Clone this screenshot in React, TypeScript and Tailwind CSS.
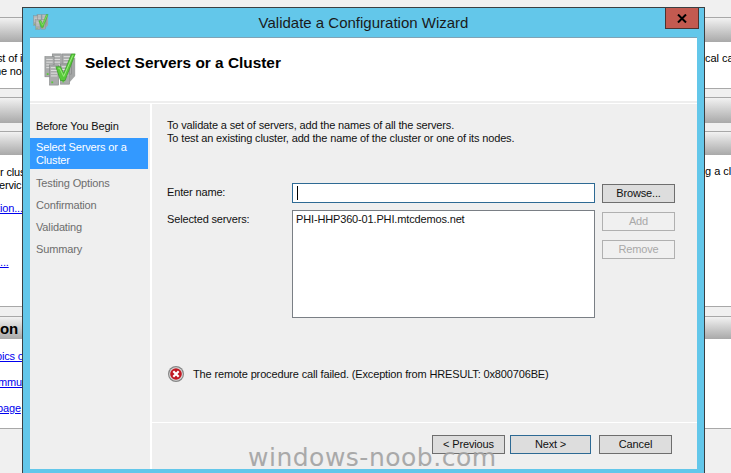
const ui = "font-['Liberation_Sans','Arial',sans-serif]";

function Gradient({ h, children }: { h: string; children?: React.ReactNode }) {
  return (
    <div className={`${h} shrink-0 border-t border-[#a8a8a8] bg-gradient-to-b from-[#f2f2f2] to-[#a9a9a9] text-[15px] font-bold leading-[24px] text-black`}>
      {children}
    </div>
  );
}

function LeftPage() {
  return (
    <div className="flex h-full w-[23px] shrink-0 flex-col overflow-hidden whitespace-nowrap text-[11px] tracking-[-0.15px] text-black">
      <div className="h-[17px] shrink-0" />
      <Gradient h="h-[25px]" />
      <div className="flex h-[46px] shrink-0 flex-col bg-white pt-[10px] leading-[13px]">
        <div className="ml-[-3px]">st of i</div>
        <div className="ml-[-5px]">ne no</div>
      </div>
      <div className="h-[9px] shrink-0 border-t border-[#a8a8a8]" />
      <Gradient h="h-[26px]" />
      <div className="h-[8px] shrink-0" />
      <Gradient h="h-[24px]" />
      <div className="h-[151px] shrink-0 bg-white pt-[11px] leading-[13px]">
        <div>r clus</div>
        <div className="ml-[-1px]">ervic</div>
        <div className="ml-[-3px] mt-[10px] text-[#0000ee] underline">tion...</div>
        <div className="mt-[41px] text-[#0000ee] underline">...</div>
      </div>
      <div className="h-[10px] shrink-0 border-t border-[#a8a8a8]" />
      <Gradient h="h-[23px]">
        <span>on</span>
      </Gradient>
      <div className="flex h-[89px] shrink-0 flex-col gap-[13px] bg-white pt-[11px] leading-[13px] text-[#0000ee] underline">
        <div className="ml-[-4px]">pics o</div>
        <div className="ml-[-2px]">mmu</div>
        <div className="ml-[-3px]">page</div>
      </div>
      <div className="grow border-t border-[#a8a8a8]" />
    </div>
  );
}

function RightPage() {
  return (
    <div className="flex h-full w-[27px] shrink-0 flex-col overflow-hidden whitespace-nowrap text-[11px] text-black">
      <div className="h-[17px] shrink-0" />
      <Gradient h="h-[25px]" />
      <div className="h-[46px] shrink-0 bg-white pl-[1px] pt-[10px] leading-[13px]">cal ca</div>
      <div className="h-[9px] shrink-0 border-t border-[#a8a8a8]" />
      <Gradient h="h-[26px]" />
      <div className="h-[8px] shrink-0" />
      <Gradient h="h-[24px]" />
      <div className="h-[151px] shrink-0 bg-white pl-[1px] pt-[10px] leading-[13px]">g a cl</div>
      <div className="h-[10px] shrink-0 border-t border-[#a8a8a8]" />
      <Gradient h="h-[23px]" />
      <div className="h-[89px] shrink-0 bg-white" />
      <div className="grow border-t border-[#a8a8a8]" />
    </div>
  );
}

function ServerIcon({ size }: { size: number }) {
  const rack = (x: number, y: number, k: number) => (
    <g key={k}>
      <rect x={x} y={y} width="10" height="22" fill="#a9abab" stroke="#7e8080" strokeWidth="0.6" />
      <path d={`M${x + 1.5} ${y + 3}h7M${x + 1.5} ${y + 6}h7M${x + 1.5} ${y + 9}h7M${x + 1.5} ${y + 12}h7`} stroke="#e8e8e8" strokeWidth="1" />
      <rect x={x + 2} y={y + 18} width="2" height="2" fill="#5cc83c" />
    </g>
  );
  return (
    <svg width={size} height={size} viewBox="0 0 36 36" className="shrink-0">
      <path d="M28 8l6-3v20l-6 7z" fill="#a4a6a6" />
      {rack(9, 1, 1)}
      {rack(20, 1, 2)}
      {rack(1, 4, 3)}
      {rack(6, 13, 4)}
      {rack(18, 12, 5)}
      <path d="M13 15h5l3.500 7L30 1h4L23 30h-5z" fill="#58cb3a" stroke="#3a9c28" strokeWidth="0.8" />
      <path d="M15.500 16.500h1.500l4.500 9L31.500 2.500" fill="none" stroke="#a4ec8a" strokeWidth="1" />
    </svg>
  );
}

function ErrorIcon() {
  return (
    <svg width="16" height="16" viewBox="0 0 16 16" className="shrink-0">
      <circle cx="8" cy="8" r="8" fill="#858585" />
      <circle cx="8" cy="8" r="6.800" fill="#dedede" />
      <circle cx="8" cy="8" r="5.800" fill="#c01822" />
      <path d="M5.300 5.300l5.400 5.400M10.700 5.300l-5.400 5.400" stroke="#ffffff" strokeWidth="2.200" />
    </svg>
  );
}

function Btn({ children, cls }: { children: React.ReactNode; cls: string }) {
  return <div className={`flex h-[19px] items-center justify-center border text-[11px] tracking-[-0.15px] ${cls}`}>{children}</div>;
}

export default function App() {
  return (
    <div className={`relative flex h-[473px] w-[731px] justify-between overflow-hidden bg-[#f0f0f0] ${ui}`}>
      <LeftPage />
      <RightPage />

      <div className="absolute left-[22px] top-[7px] flex h-[466px] w-[683px] flex-col border-x border-t border-[#3a3f42] bg-[#63c7ea]">
        <div className="relative flex h-[29px] shrink-0 items-center justify-center text-[15px] text-[#1a1a1a]">
          <div className="absolute left-[10px] top-[6px]">
            <ServerIcon size={16} />
          </div>
          <span className="mt-[1px]">Validate a Configuration Wizard</span>
          <div className="absolute right-[5px] top-0 flex h-[21px] w-[34px] items-center justify-center border border-t-0 border-[#4d3330] bg-[#c35a50]">
            <svg width="10" height="9" viewBox="0 0 10 9">
              <path d="M1 .5l8 8M9 .5l-8 8" stroke="#000000" strokeWidth="2" />
            </svg>
          </div>
        </div>

        <div className="mx-[7px] flex min-h-0 grow flex-col border-t border-[#7fa3b6] bg-white">
          <div className="flex h-[65px] shrink-0 items-start border-b-2 border-[#eeeeee] pl-[14px] pt-[15px]">
            <ServerIcon size={33} />
            <div className="ml-[8px] text-[15.400px] font-bold leading-[20px] text-black">Select Servers or a Cluster</div>
          </div>

          <div className="mt-[1px] flex min-h-0 grow">
            <div className="w-[118px] shrink-0 bg-[#efefef] text-[11px] leading-[13px] tracking-[-0.15px]">
              <div className="px-[6px] pb-[5px] pt-[16px] text-[#111111]">Before You Begin</div>
              <div className="bg-[#3399ff] px-[6px] py-[2.500px] text-white">Select Servers or a Cluster</div>
              <div className="flex flex-col gap-[9px] px-[6px] pt-[8px] text-[#6d6d6d]">
                <div>Testing Options</div>
                <div>Confirmation</div>
                <div>Validating</div>
                <div>Summary</div>
              </div>
            </div>
            <div className="w-[4px] shrink-0 border-r-2 border-white bg-[#efefef]" />

            <div className="flex min-w-0 grow flex-col bg-[#efefef] text-[11px] tracking-[-0.15px] text-[#111111]">
              <div className="flex grow flex-col pl-[15px]">
                <div className="pt-[15px] leading-[13px]">
                  <div>To validate a set of servers, add the names of all the servers.</div>
                  <div>To test an existing cluster, add the name of the cluster or one of its nodes.</div>
                </div>
                <div className="mt-[38px] flex">
                  <div className="w-[125px] shrink-0">
                    <div className="mt-[1px] leading-[16px]">Enter name:</div>
                    <div className="mt-[11px] leading-[16px]">Selected servers:</div>
                  </div>
                  <div className="w-[303px] shrink-0">
                    <div className="flex h-[20px] items-center border border-[#2e6a94] bg-white pl-[4px]">
                      <div className="h-[14px] w-px bg-black" />
                    </div>
                    <div className="mt-[7px] h-[108px] border border-[#7a7f85] bg-white pl-[3px] pt-[1px] leading-[14px]">PHI-HHP360-01.PHI.mtcdemos.net</div>
                  </div>
                  <div className="ml-[7px] flex w-[73px] flex-col gap-[9px] pt-[1px]">
                    <Btn cls="border-[#6e6e6e] bg-[#dddddd] text-[#111111]">Browse...</Btn>
                    <Btn cls="border-[#b0b0b0] bg-[#f0f0f0] text-[#a8a8a8]">Add</Btn>
                    <Btn cls="border-[#b0b0b0] bg-[#f0f0f0] text-[#a8a8a8]">Remove</Btn>
                  </div>
                </div>
                <div className="mt-[48px] flex items-center gap-[9px] pl-[1px] leading-[16px]">
                  <ErrorIcon />
                  <span>The remote procedure call failed. (Exception from HRESULT: 0x800706BE)</span>
                </div>
              </div>
              <div className="flex h-[47px] shrink-0 justify-end border-t border-white pr-[25px] pt-[12px]">
                <Btn cls="w-[73px] border-[#6e6e6e] bg-[#dddddd]">&lt; Previous</Btn>
                <Btn cls="ml-[5px] w-[81px] border-[#2e6a94] bg-[#dddddd]">Next &gt;</Btn>
                <Btn cls="ml-[8px] w-[73px] border-[#6e6e6e] bg-[#dddddd]">Cancel</Btn>
              </div>
            </div>
          </div>
        </div>
        <div className="h-[4px] shrink-0" />
      </div>

      <div className="pointer-events-none absolute left-[248px] top-[442px] font-['DejaVu_Sans',sans-serif] text-[25px] leading-[32px] tracking-[0.5px] text-[#a2a2a2] opacity-90">
        windows-noob.com
      </div>
    </div>
  );
}
